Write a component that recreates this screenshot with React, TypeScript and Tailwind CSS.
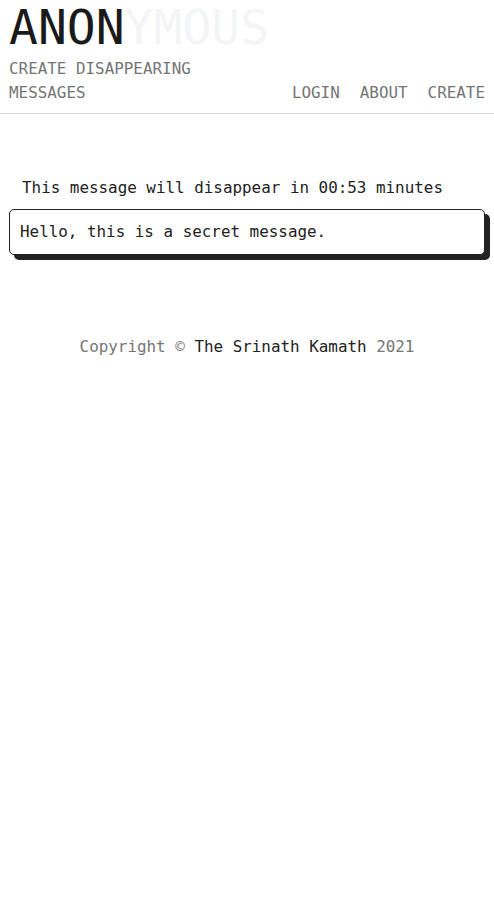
export default function App() {
  const mono = { fontFamily: '"DejaVu Sans Mono", "Liberation Mono", monospace' };
  return (
    <div className="min-h-screen bg-white text-[#222]" style={mono}>
      <header className="border-b border-[#dcdcdc] px-[9px] pb-[8px]">
        <div className="text-[48px] leading-[60px] -mt-[3px]">
          <span className="text-[#1a1a1a]">ANON</span>
          <span className="text-[#f4f5f7]">YMOUS</span>
        </div>
        <div className="flex items-end justify-between text-[15.9px] leading-[24px] text-[#757575]">
          <div className="w-[190px]">CREATE DISAPPEARING MESSAGES</div>
          <nav className="flex gap-[20px]">
            <span>LOGIN</span>
            <span>ABOUT</span>
            <span>CREATE</span>
          </nav>
        </div>
      </header>
      <main className="px-[9px] pt-[62px]">
        <p className="pl-[13px] text-[15.9px] leading-[24px] text-[#222]">
          This message will disappear in 00:53 minutes
        </p>
        <div className="mt-[9px] w-[476px] rounded-[5px] border border-[#222] bg-white px-[10px] py-[10px] text-[15.9px] leading-[24px] shadow-[5px_5px_0_#222]">
          Hello, this is a secret message.
        </div>
      </main>
      <footer className="mt-[80px] text-center text-[15.9px] leading-[24px]">
        <span className="text-[#757575]">Copyright © </span>
        <span className="text-[#222]">The Srinath Kamath</span>
        <span className="text-[#757575]"> 2021</span>
      </footer>
    </div>
  );
}
